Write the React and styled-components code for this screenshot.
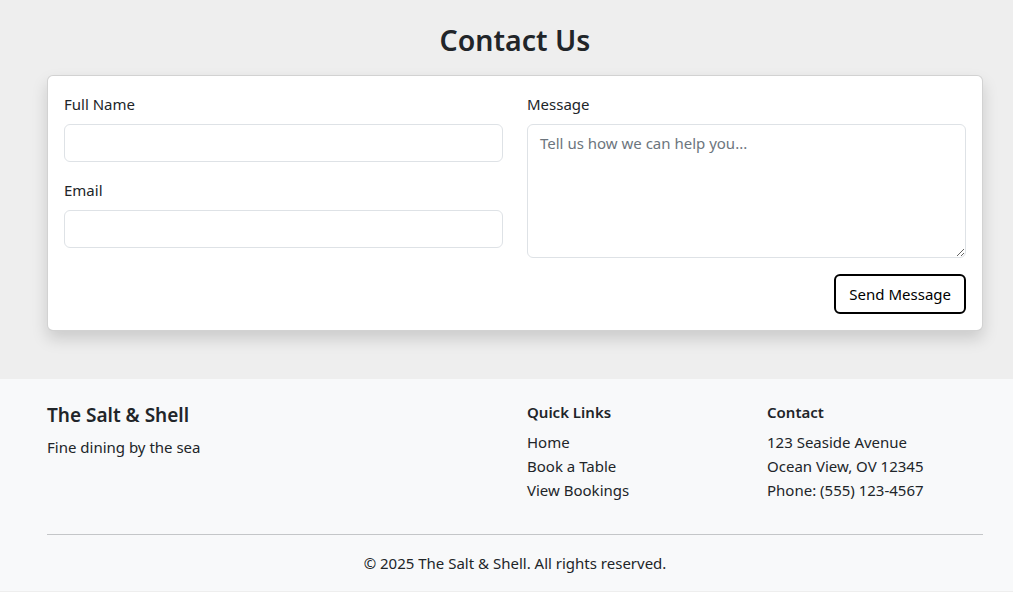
import React from "react";
import styled, { createGlobalStyle } from "styled-components";

const GlobalStyle = createGlobalStyle`
  * { box-sizing: border-box; }
  body {
    margin: 0;
    font-family: "Noto Sans", "Open Sans", sans-serif;
    font-size: 15px;
    line-height: 24px;
    color: #212529;
    background: #eeeeee;
  }
`;

const Main = styled.main`
  background: #eeeeee;
  padding: 21px 0 48px;
`;

const Container = styled.div`
  width: 936px;
  margin-left: 47px;
`;

const Title = styled.h1`
  margin: 0 0 16px;
  font-size: 28.5px;
  font-weight: 600;
  line-height: 38px;
  text-align: center;
`;

const Card = styled.div`
  background: #fff;
  border: 1px solid rgba(0, 0, 0, 0.175);
  border-radius: 6px;
  box-shadow: 0 8px 16px rgba(0, 0, 0, 0.15);
  padding: 16px;
`;

const FormGrid = styled.div`
  display: grid;
  grid-template-columns: 1fr 1fr;
  column-gap: 24px;
`;

const Field = styled.div`
  margin-bottom: ${({ $last }) => ($last ? "0" : "16px")};
`;

const Label = styled.label`
  display: block;
  margin-bottom: 8px;
`;

const Input = styled.input`
  display: block;
  width: 100%;
  height: 38px;
  padding: 6px 12px;
  font: inherit;
  border: 1px solid #dee2e6;
  border-radius: 6px;
  background: #fff;
`;

const TextArea = styled.textarea`
  display: block;
  width: 100%;
  height: 134px;
  padding: 6px 12px;
  font: inherit;
  color: #212529;
  border: 1px solid #dee2e6;
  border-radius: 6px;
  resize: vertical;
  &::placeholder { color: #6c757d; }
`;

const Actions = styled.div`
  display: flex;
  justify-content: flex-end;
  margin-top: 16px;
`;

const Button = styled.button`
  font: inherit;
  color: #000;
  background: #fff;
  border: 2px solid #000;
  border-radius: 6px;
  padding: 6px 13px;
  line-height: 24px;
  cursor: pointer;
`;

const Footer = styled.footer`
  background: #f8f9fa;
  padding: 24px 0 16px;
`;

const FooterGrid = styled.div`
  display: grid;
  grid-template-columns: 456px 216px 216px;
  column-gap: 24px;
`;

const Brand = styled.h5`
  margin: 0 0 8px;
  font-size: 19px;
  font-weight: 600;
  line-height: 24px;
`;

const Text = styled.p`
  margin: 0 0 16px;
`;

const ColTitle = styled.h6`
  margin: 0 0 8px;
  font-size: 15px;
  font-weight: 600;
  line-height: 19px;
`;

const List = styled.ul`
  list-style: none;
  margin: 0 0 16px;
  padding: 0;
`;

const Divider = styled.hr`
  margin: 16px 0;
  border: 0;
  border-top: 1px solid #c4c6c8;
`;

const Copy = styled.p`
  margin: 0;
  text-align: center;
`;

export default function App() {
  return (
    <>
      <GlobalStyle />
      <Main>
        <Container>
          <Title>Contact Us</Title>
          <Card>
            <FormGrid>
              <div>
                <Field>
                  <Label>Full Name</Label>
                  <Input type="text" />
                </Field>
                <Field $last>
                  <Label>Email</Label>
                  <Input type="email" />
                </Field>
              </div>
              <div>
                <Field $last>
                  <Label>Message</Label>
                  <TextArea rows={5} placeholder="Tell us how we can help you..." />
                </Field>
                <Actions>
                  <Button>Send Message</Button>
                </Actions>
              </div>
            </FormGrid>
          </Card>
        </Container>
      </Main>
      <Footer>
        <Container>
          <FooterGrid>
            <div>
              <Brand>The Salt &amp; Shell</Brand>
              <Text>Fine dining by the sea</Text>
            </div>
            <div>
              <ColTitle>Quick Links</ColTitle>
              <List>
                <li>Home</li>
                <li>Book a Table</li>
                <li>View Bookings</li>
              </List>
            </div>
            <div>
              <ColTitle>Contact</ColTitle>
              <List>
                <li>123 Seaside Avenue</li>
                <li>Ocean View, OV 12345</li>
                <li>Phone: (555) 123-4567</li>
              </List>
            </div>
          </FooterGrid>
          <Divider />
          <Copy>© 2025 The Salt &amp; Shell. All rights reserved.</Copy>
        </Container>
      </Footer>
    </>
  );
}
